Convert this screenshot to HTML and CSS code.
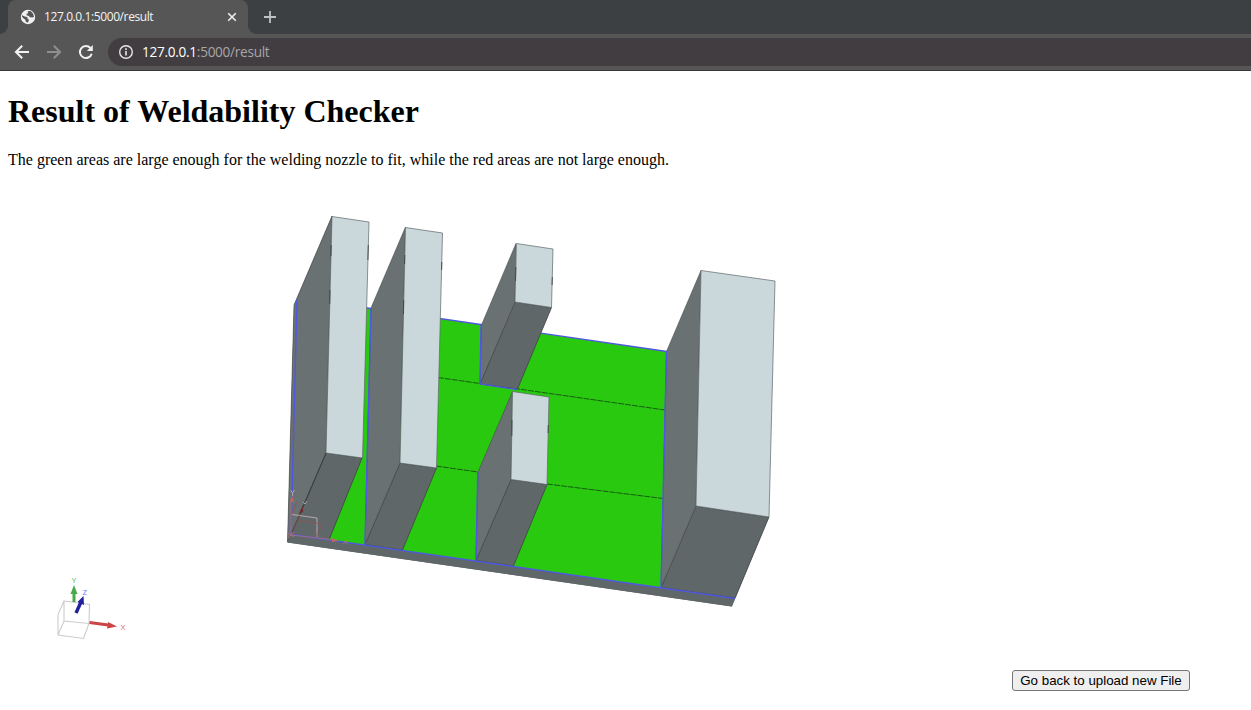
FILE: index.html
```
<!DOCTYPE html>
<html lang="en">
<head>
<meta charset="utf-8">
<title>127.0.0.1:5000/result</title>
<link rel="stylesheet" href="styles.css">
</head>
<body>
<header class="browser">
  <div class="tabstrip">
    <div class="tab">
      <svg class="globe" width="16" height="16" viewBox="0 0 16 16"><circle cx="8" cy="8" r="7.2" fill="#f1f1f1"/><path d="M2 6.3 4.8 7.4 7.6 8.2 7.4 10 9 10.6 8 13.8 5.6 12.6 5.5 10.8 3.6 9.5 2 7.8ZM7.6 2.2 10.5 2 13 4.4 14 7.8 12.5 8.6 10 8.2 8.6 6.8 6.8 6.4 6.5 4.8 8.3 4.2Z" fill="#555"/></svg>
      <span class="tab-title">127.0.0.1:5000/result</span>
      <svg class="close" width="10" height="10" viewBox="0 0 10 10"><path d="M1.2 1.2 8.8 8.8M8.8 1.2 1.2 8.8" stroke="#eee" stroke-width="1.6"/></svg>
    </div>
    <svg class="plus" width="12" height="12" viewBox="0 0 12 12"><path d="M6 0V12M0 6H12" stroke="#bfc1c2" stroke-width="1.8"/></svg>
  </div>
  <div class="toolbar">
    <svg class="nav" width="16" height="16" viewBox="0 0 16 16"><path d="M15 8H2.2M8.2 1.7 1.9 8 8.2 14.3" fill="none" stroke="#f1f1f1" stroke-width="2"/></svg>
    <svg class="nav" width="16" height="16" viewBox="0 0 16 16"><path d="M1 8H13.8M7.8 1.7 14.1 8 7.8 14.3" fill="none" stroke="#8f8f8f" stroke-width="2"/></svg>
    <svg class="nav" width="16" height="16" viewBox="0 0 16 16"><path d="M13.7 9.7A6 6 0 1 1 12.4 4" fill="none" stroke="#f1f1f1" stroke-width="2"/><path d="M14.8 1V7H8.8Z" fill="#f1f1f1"/></svg>
    <div class="omnibox">
      <svg width="16" height="16" viewBox="0 0 16 16"><circle cx="8" cy="8" r="6.3" fill="none" stroke="#e8e8e8" stroke-width="1.4"/><path d="M8 7.1V11.6M8 4.3V6" stroke="#e8e8e8" stroke-width="1.6"/></svg>
      <span class="url"><b>127.0.0.1</b>:5000/result</span>
    </div>
  </div>
</header>
<main class="page">
  <h1>Result of Weldability Checker</h1>
  <p>The green areas are large enough for the welding nozzle to fit, while the red areas are not large enough.</p>
  <svg class="model" width="1000" height="470" viewBox="8 185 1000 470">
    <path class="foot" d="M294 305 332 216 326 453 735 598 769 517 732 606.5 287.5 542.5Z"/>
    <path class="green" d="M364 307.5 667 351.5 661 587.5 328 540Z"/>
    <path class="seam" d="M438 377.5 665 410M436 466 478 472M547 484 663 498.5"/>
    <path class="rim" d="M364 307.5 667 351.5"/>

    <path class="foot edge" d="M326 453 362 458 329 540 291 535Z"/>
    <path class="side" d="M294 305 332 216 326 453 291 534 287.5 542Z"/>
    <path class="face" d="M332 216.5 369 222 362.5 458 326 453Z"/>
    <path class="crease" d="M331.2 245 331 256M330 290 329.7 304M368.3 245 367.9 260M326 453 291 535"/>

    <path class="foot edge" d="M400 463 436.5 468 402.5 550 365 544.5Z"/>
    <path class="side" d="M371 308 405.5 227 400 463 365 544.5Z"/>
    <path class="face" d="M405.5 227.5 442.5 233 436.5 468 400 463Z"/>
    <path class="crease" d="M404.8 255 404.6 264M403.7 300 403.4 314M441.8 262 441.6 270"/>

    <path class="foot edge" d="M515 302 551.5 307.5 517.5 389 480 384Z"/>
    <path class="side" d="M481.5 325 516 243.5 515 302 480 384Z"/>
    <path class="face" d="M516.5 243.5 553 249 551.5 307.5 515 302Z"/>
    <path class="crease" d="M515.8 267 515.5 281M552.3 277 552.1 285"/>

    <path class="foot edge" d="M511 479.5 547 484.5 513.5 566 476 560.5Z"/>
    <path class="side" d="M478 472 512.5 391.5 511 479.5 476 560.5Z"/>
    <path class="face" d="M512.5 391.5 549 397 547 484.5 511 479.5Z"/>
    <path class="crease" d="M512 420 511.8 436M548.3 425 548.1 433"/>

    <path class="foot edge" d="M696 506 769 517 735 598 661 587.5Z"/>
    <path class="side" d="M666.5 351.5 701 270.5 696 506 661 587.5Z"/>
    <path class="face" d="M701 270.5 775 281 769 517 696 506Z"/>
    <path class="foot" d="M291 534.5 735 598.5 731.5 606.5 287.5 542.5Z"/>

    <path class="rim" d="M297 299 291 534.5 735 598.5M371 308 365 544.5M481 325 480 384 517 389.5M477.8 472 476 560.5M666.5 351 661 587.5"/>

    <g fill="none" stroke-width="1">
      <path d="M292 514.5 317 518V537" stroke="#b5aaaa"/>
      <path d="M292 514 297 501M297 520 322 524 316 537M292 534 302 508" stroke="#91524f" stroke-width=".7"/>
      <path d="M290.5 490 292.5 493 294.5 490M292.5 493V496" stroke="#aaa8ad"/>
      <path d="M303 502 305 504 307 501" stroke="#aaa0a0"/>
      <path d="M287 533 294 537M294 532 288 538M291 502V535L335 540M343 540 348 544M348 540 343 544" stroke="#c27470" stroke-width=".7"/>
    </g>
    <path d="M292 495 294 502H290ZM332 538 339 541 332 542Z" fill="#b96966"/>
    <path d="M303 505V512L299 514Z" fill="#6a2b2d"/>

    <g fill="none" stroke="#ccc" stroke-width="1.1">
      <path d="M64 601 89.5 604.5 89 623.5 64 621ZM64 601 58 614.5V635L83.5 638.5 89 623.5M58 635 64 621"/>
    </g>
    <path d="M74 602V592" stroke="#49a849" stroke-width="3"/><path d="M74 585 77.5 594H70.5Z" fill="#49a849"/>
    <path d="M76 613 81 602" stroke="#20209d" stroke-width="3.4"/><path d="M83.5 596 84 605 77.5 602Z" fill="#20209d"/>
    <path d="M89.5 622.5 108 625" stroke="#cc4545" stroke-width="3"/><path d="M117 626.5 107 628.5 108 622Z" fill="#cc4545"/>
    <text class="axis" x="71.5" y="583" fill="#62b862">Y</text>
    <text class="axis" x="82.5" y="595" fill="#7777fa">Z</text>
    <text class="axis" x="120.5" y="630" fill="#dc7272">X</text>
  </svg>
  <div class="actions"><button type="button">Go back to upload new File</button></div>
</main>
</body>
</html>
```
FILE: styles.css
```
* { box-sizing: border-box; }
body { margin: 0; background: #fff; color: #000; font-family: "Liberation Serif", serif; overflow: hidden; }
.browser { height: 71px; background: #565656; border-bottom: 1px solid #383838; font-family: "Open Sans", "Noto Sans", sans-serif; }
.tabstrip { display: flex; align-items: flex-start; height: 34px; padding-left: 8px; background: #3c4043; }
.tab { position: relative; display: flex; align-items: center; width: 240px; height: 34px; padding: 0 11px 0 12px; background: #565656; border-radius: 8px 8px 0 0; }
.tab::before, .tab::after { content: ""; position: absolute; bottom: 0; width: 8px; height: 8px; }
.tab::before { left: -8px; background: radial-gradient(circle at 0 0, transparent 7.5px, #565656 8px); }
.tab::after { right: -8px; background: radial-gradient(circle at 8px 0, transparent 7.5px, #565656 8px); }
.tab-title { flex: 1; margin-left: 8px; font-size: 12px; line-height: 16px; letter-spacing: -.4px; color: #f4f4f4; white-space: nowrap; }
.plus { margin: 11px 0 0 16px; }
.toolbar { display: flex; align-items: center; height: 36px; padding-left: 14px; }
.nav { flex: none; margin-right: 16px; }
.omnibox { display: flex; align-items: center; flex: 1; height: 28px; margin-left: -2px; padding-left: 10px; background: #413d41; border-radius: 14px 0 0 14px; }
.url { margin-left: 8px; font-size: 13.6px; line-height: 20px; letter-spacing: -.28px; color: #a8a6a8; }
.url b { font-weight: 400; color: #fff; }
.page { padding: 22px 8px 0; }
h1 { margin: 0; font-size: 32px; line-height: 37px; }
p { margin: 21px 0 0; font-size: 16px; line-height: 18px; }
.model { display: block; margin-top: 16px; }
.foot { fill: #606768; }
.side { fill: #6a7172; stroke: #454b4c; stroke-width: .6; }
.face { fill: #cad7db; stroke: #5d6668; stroke-width: .7; }
.green { fill: #29c910; }
.edge { stroke: #3c4141; stroke-width: .8; }
.seam { fill: none; stroke: #195b11; stroke-width: 1; stroke-dasharray: 6 1; }
.crease { fill: none; stroke: #333b3c; stroke-width: .8; }
.rim { fill: none; stroke: #5058df; stroke-width: 1.4; }
.axis { font: 7.5px "Liberation Sans", sans-serif; }
.actions { display: flex; justify-content: flex-end; margin: 15px 53px 0 0; }
button { width: 178px; height: 21px; padding: 0; border: 1px solid #767676; border-radius: 3px; background: #efefef; color: #000; font: 13.333px/18px "Liberation Sans", sans-serif; white-space: nowrap; }
```
